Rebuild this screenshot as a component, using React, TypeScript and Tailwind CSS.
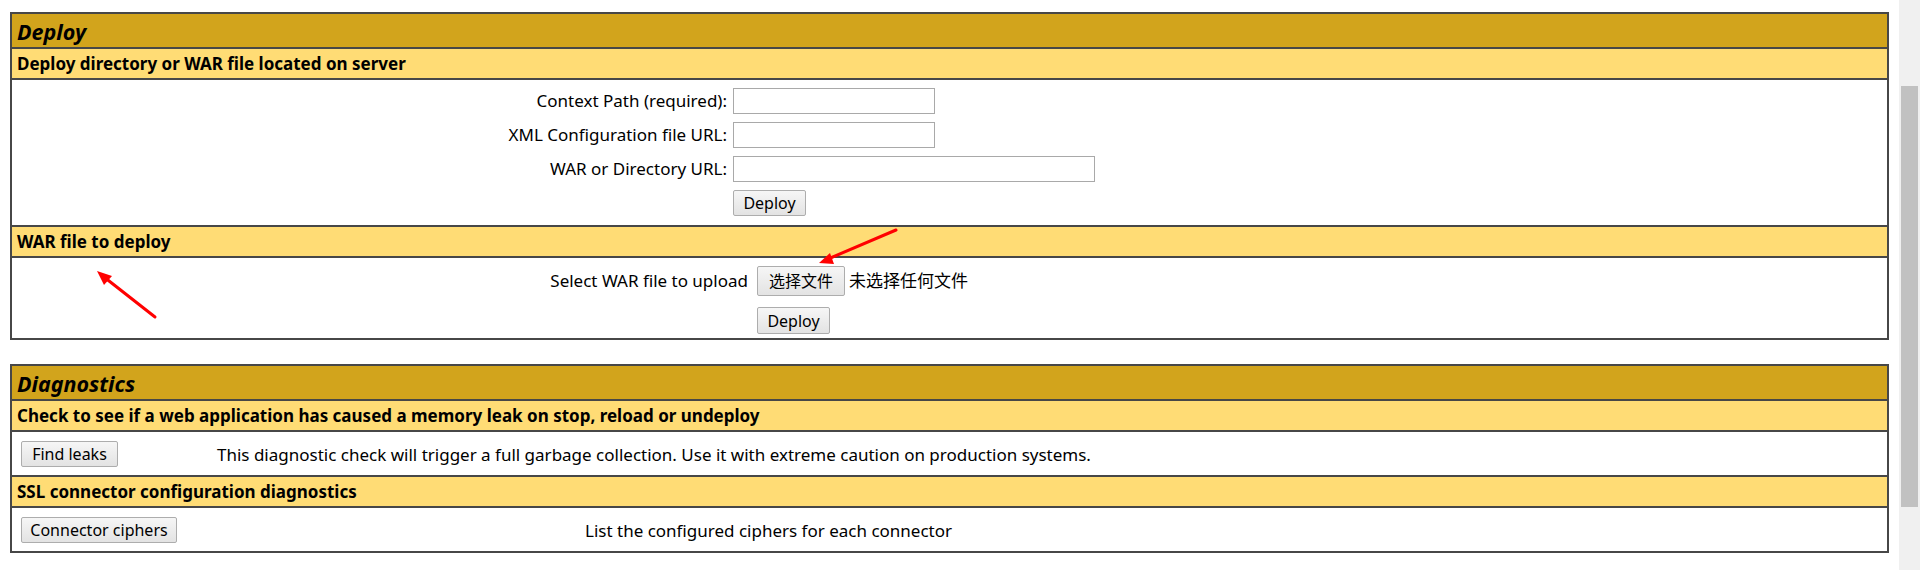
import React from "react";

function Btn({ label, className }: { label: string; className: string }) {
  return (
    <button
      type="button"
      className={`flex items-center justify-center border border-[#adadad] bg-gradient-to-b from-[#f6f6f6] to-[#e3e3e3] text-[16px] leading-none text-black rounded-[2px] ${className}`}
    >
      {label}
    </button>
  );
}

function Title({ text }: { text: string }) {
  return (
    <div className="h-[35px] border-b-2 border-[#474747] bg-[#D2A41C] flex items-center pl-[5px] pt-[2px]">
      <span className="text-[21.5px] font-bold italic text-black leading-none">{text}</span>
    </div>
  );
}

function Sub({ text }: { text: string }) {
  return (
    <div className="h-[31px] border-b-2 border-[#474747] bg-[#FFDC75] flex items-center pl-[5px]">
      <span className="text-[17px] font-bold text-black leading-none">{text}</span>
    </div>
  );
}

function Input({ w }: { w: string }) {
  return <div className={`h-[26px] border border-[#a9a9a9] bg-white ${w}`} />;
}

export default function App() {
  return (
    <div className="relative w-[1920px] h-[570px] overflow-hidden bg-white font-['Noto_Sans','Noto_Sans_CJK_SC',sans-serif] text-black flex">
      <div className="flex-1 px-[10px] pt-[12px] flex flex-col gap-[24px]">
        {/* Deploy table */}
        <div className="border-2 border-[#474747]">
          <Title text="Deploy" />
          <Sub text="Deploy directory or WAR file located on server" />
          <div className="h-[147px] border-b-2 border-[#474747] pt-[8px] grid grid-cols-[721px_1fr] gap-y-[8px] auto-rows-[26px] text-[17px]">
            <div className="text-right pr-[6px] flex items-center justify-end">Context Path (required):</div>
            <Input w="w-[202px]" />
            <div className="text-right pr-[6px] flex items-center justify-end">XML Configuration file URL:</div>
            <Input w="w-[202px]" />
            <div className="text-right pr-[6px] flex items-center justify-end">WAR or Directory URL:</div>
            <Input w="w-[362px]" />
            <div />
            <Btn label="Deploy" className="w-[73px] h-[26px]" />
          </div>
          <Sub text="WAR file to deploy" />
          <div className="h-[80px] pt-[8px] grid grid-cols-[745px_1fr] gap-y-[7px] text-[17px]">
            <div className="h-[30px] flex items-center justify-end pr-[9px]">Select WAR file to upload</div>
            <div className="h-[30px] flex items-center gap-[4px]">
              <Btn label="选择文件" className="w-[88px] h-[30px]" />
              <span>未选择任何文件</span>
            </div>
            <div />
            <Btn label="Deploy" className="w-[73px] h-[27px]" />
          </div>
        </div>

        {/* Diagnostics table */}
        <div className="border-2 border-[#474747]">
          <Title text="Diagnostics" />
          <Sub text="Check to see if a web application has caused a memory leak on stop, reload or undeploy" />
          <div className="h-[45px] border-b-2 border-[#474747] flex items-center pl-[9px] text-[17px]">
            <Btn label="Find leaks" className="w-[97px] h-[26px]" />
            <span className="ml-[99px] mt-[2px]">
              This diagnostic check will trigger a full garbage collection. Use it with extreme caution on production systems.
            </span>
          </div>
          <Sub text="SSL connector configuration diagnostics" />
          <div className="h-[43px] flex items-center pl-[9px] text-[17px]">
            <Btn label="Connector ciphers" className="w-[156px] h-[26px]" />
            <span className="ml-[408px] mt-[2px]">List the configured ciphers for each connector</span>
          </div>
        </div>
      </div>

      {/* scrollbar */}
      <div className="w-[21px] h-full bg-[#f0f0f0] pt-[86px] pl-[2px] pr-[2px]">
        <div className="h-[421px] bg-[#c1c1c1]" />
      </div>

      {/* annotation arrows */}
      <svg
        className="absolute left-0 top-0 pointer-events-none"
        width="1920"
        height="570"
        viewBox="0 0 1920 570"
      >
        <line x1="155" y1="317" x2="104" y2="277" stroke="#ff0000" strokeWidth="3" strokeLinecap="round" />
        <polygon points="97,271 112,276 104,285" fill="#ff0000" />
        <line x1="896" y1="230" x2="828" y2="259" stroke="#ff0000" strokeWidth="3" strokeLinecap="round" />
        <polygon points="819,263 830,253 834,264" fill="#ff0000" />
      </svg>
    </div>
  );
}
